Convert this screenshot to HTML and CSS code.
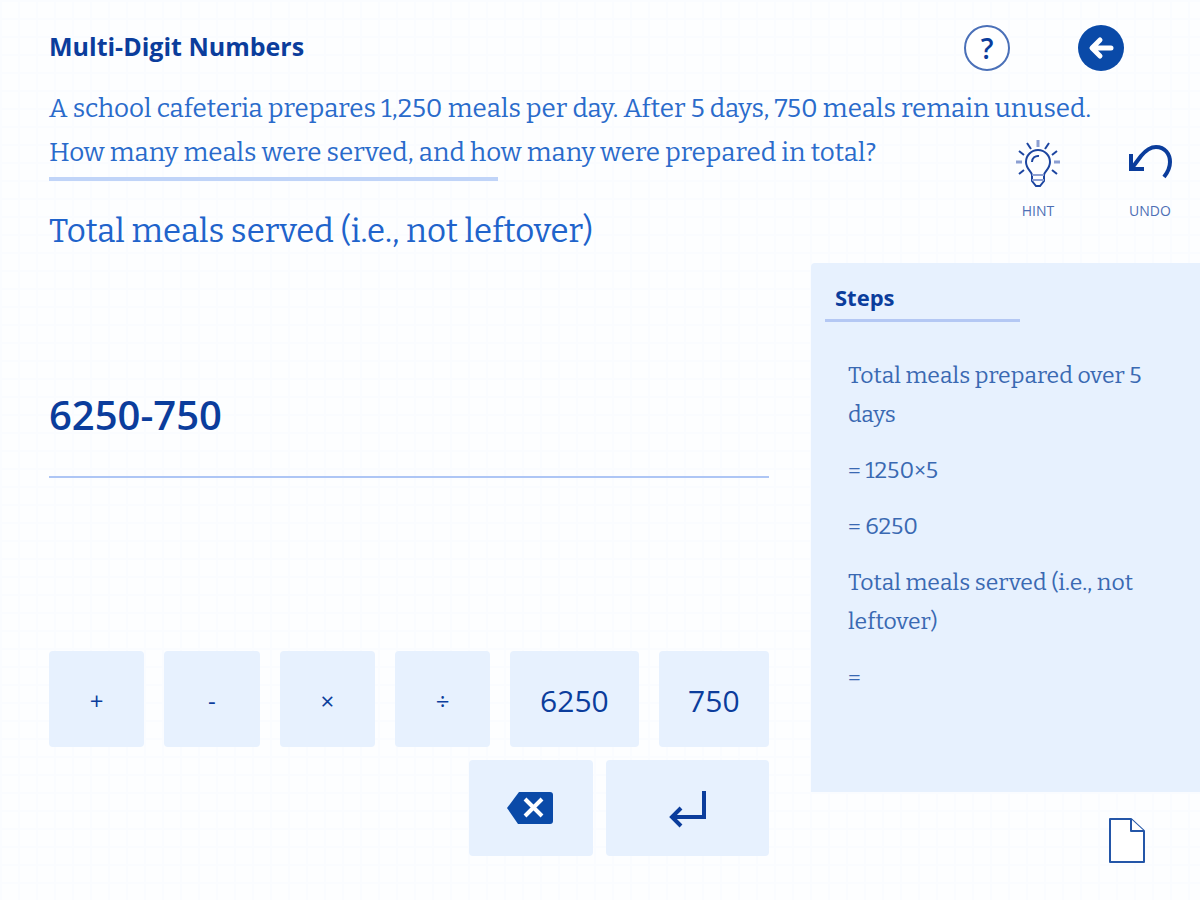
FILE: index.html
```html
<!DOCTYPE html>
<html lang="en">
<head>
<meta charset="utf-8">
<meta name="viewport" content="width=device-width, initial-scale=1">
<title>Multi-Digit Numbers</title>
<link rel="stylesheet" href="styles.css">
</head>
<body>
<div class="page">
  <header class="topbar">
    <h1 class="title">Multi-Digit Numbers</h1>
    <nav class="nav">
      <button class="round" type="button" aria-label="Help">?</button>
      <button class="round round-solid" type="button" aria-label="Back">
        <svg width="26" height="24" viewBox="0 0 26 24" fill="none" stroke="#fff" stroke-width="5" stroke-linecap="round" stroke-linejoin="round"><path d="M12 4 4 12l8 8M5 12h18"/></svg>
      </button>
    </nav>
  </header>

  <p class="problem">A school cafeteria prepares 1,250 meals per day. After 5 days, 750 meals remain unused.<br>How many meals were served, and how many were prepared in total?</p>

  <div class="tools">
    <button class="tool" type="button">
      <svg width="44" height="48" viewBox="0 0 44 48" fill="none" stroke="#1c45a0" stroke-width="2"><path d="M16 36c0-3-6-6-6-13a12 12 0 0 1 24 0c0 7-6 10-6 13v6l-4 5h-4l-4-5z"/><path d="M16 36h12M16 41h12" stroke="#8c9fd2"/><path d="M16 23a6 6 0 0 1 7-6"/><path d="M11 4l4 6M33 4l-4 6M3 12l5 4M41 12l-5 4M3 35l5-4M41 35l-5-4"/><path d="M22 1v7M0 23h6M44 23h-6" stroke="#8c9fd2" stroke-width="3"/></svg>
      <span>HINT</span>
    </button>
    <button class="tool" type="button">
      <svg width="44" height="48" viewBox="0 0 44 48" fill="none" stroke="#0b3d9c" stroke-width="4"><path d="M3 15v15h13"/><path d="M4 29 13 17C18 11 22 8 28 8c9 0 14 7 14 15 0 6-2 10-6 15"/></svg>
      <span>UNDO</span>
    </button>
  </div>

  <label class="prompt" for="answer">Total meals served (i.e., not leftover)</label>

  <main class="work">
    <input class="answer" id="answer" type="text" value="6250-750">
    <div class="keypad">
      <div class="keys">
        <button class="key" type="button">+</button>
        <button class="key" type="button">-</button>
        <button class="key" type="button">×</button>
        <button class="key" type="button">÷</button>
        <button class="key key-number" type="button">6250</button>
        <button class="key key-number" type="button">750</button>
      </div>
      <div class="actions">
        <button class="key" type="button" aria-label="Delete">
          <svg width="48" height="34" viewBox="0 0 48 34"><path d="M12 0h31q3 0 3 3v26q0 3-3 3H11L0 16z" fill="#0a4aa8"/><path d="m18 7 17 17M35 7 18 24" stroke="#fff" stroke-width="4"/></svg>
        </button>
        <button class="key" type="button" aria-label="Enter">
          <svg width="40" height="38" viewBox="0 0 40 38" fill="none" stroke="#0b3d9c" stroke-width="4"><path d="M36 1v26H3M13 18l-9 9 9 9"/></svg>
        </button>
      </div>
    </div>
  </main>

  <div class="side">
    <section class="steps">
      <h2 class="steps-title">Steps</h2>
      <div class="steps-list">
        <p>Total meals prepared over 5 days</p>
        <p>= 1250×5</p>
        <p>= 6250</p>
        <p>Total meals served (i.e., not leftover)</p>
        <p>=</p>
      </div>
    </section>
    <button class="sheet" type="button" aria-label="Scratch paper">
      <svg width="36" height="46" viewBox="0 0 36 46" fill="#fff" stroke="#2456a8" stroke-width="2" stroke-linejoin="round"><path d="M1 1h21l13 12v31H1z"/><path d="M22 1v12h13"/></svg>
    </button>
  </div>
</div>
</body>
</html>
```
FILE: styles.css
```css
* {
  box-sizing: border-box;
}

body {
  margin: 0;
  background-color: #fdfeff;
  background-image:
    linear-gradient(#fafcff 2px, transparent 2px),
    linear-gradient(90deg, #fafcff 2px, transparent 2px);
  background-size: 18px 18px;
  color: #0b3d9c;
  font-family: "Open Sans", "Noto Sans", sans-serif;
}

button {
  padding: 0;
  border: 0;
  background: none;
  color: inherit;
  font: inherit;
  cursor: pointer;
}

svg {
  display: block;
}

.page {
  display: grid;
  grid-template-columns: minmax(0, 1fr) 389px;
  grid-template-rows: auto auto 82px 1fr;
  min-height: 100vh;
}

.topbar {
  grid-column: 1 / -1;
  display: flex;
  align-items: center;
  justify-content: space-between;
  padding: 25px 76px 16px 49px;
}

.title {
  margin: 0;
  padding-bottom: 4px;
  font-size: 25px;
  line-height: 42px;
  font-weight: 700;
}

.nav {
  display: flex;
  gap: 68px;
}

.round {
  display: grid;
  place-items: center;
  width: 46px;
  height: 46px;
  border: 2px solid #4a70b8;
  border-radius: 50%;
  background: #fff;
  font-size: 28px;
  line-height: 28px;
  font-weight: 600;
}

.round-solid {
  border: 0;
  background: #0a4aa8;
}

.problem {
  grid-row: 2;
  grid-column: 1 / -1;
  margin: 0;
  padding: 0 49px;
  color: #2a6bcb;
  font-family: Bitter, "DejaVu Serif Condensed", "DejaVu Serif", serif;
  font-size: 26px;
  line-height: 44px;
}

.problem::after {
  content: "";
  display: block;
  width: 449px;
  max-width: 100%;
  height: 4px;
  margin-top: 2px;
  background: #c0d4f8;
}

.tools {
  grid-row: 2 / 4;
  grid-column: 2;
  align-self: end;
  justify-self: end;
  display: flex;
  gap: 62px;
  padding: 0 25px 44px 0;
}

.tool {
  display: flex;
  flex-direction: column;
  align-items: center;
  gap: 16px;
  width: 50px;
  color: #4e6fb5;
  font-size: 14px;
  line-height: 16px;
}

.prompt {
  grid-row: 3;
  grid-column: 1;
  align-self: start;
  padding: 28px 0 0 49px;
  color: #2063cb;
  font-family: Bitter, "DejaVu Serif Condensed", "DejaVu Serif", serif;
  font-size: 33px;
  line-height: 44px;
}

.work {
  display: flex;
  flex-direction: column;
  justify-content: space-between;
  padding: 103px 42px 44px 49px;
}

.answer {
  width: 100%;
  height: 112px;
  padding: 0 0 14px;
  border: 0;
  border-bottom: 2px solid #aec6f5;
  background: none;
  color: inherit;
  font-family: inherit;
  font-size: 40px;
  font-weight: 600;
  outline: none;
}

.keypad {
  display: grid;
  gap: 13px;
}

.keys {
  display: grid;
  grid-template-columns: repeat(4, 95fr) 128fr 110fr;
  gap: 20px;
}

.actions {
  display: grid;
  grid-template-columns: 124px 163px;
  justify-content: end;
  gap: 13px;
}

.key {
  display: grid;
  place-items: center;
  height: 96px;
  padding-top: 2px;
  border-radius: 4px;
  background: #e7f1fe;
  font-size: 24px;
}

.key-number {
  font-size: 30px;
}

.side {
  display: flex;
  flex-direction: column;
}

.steps {
  min-height: 529px;
  padding: 19px 0 24px 14px;
  border-top-left-radius: 4px;
  background: #e7f1fe;
}

.steps-title {
  width: 195px;
  margin: 0;
  padding: 0 10px 7px;
  border-bottom: 3px solid #b4c8f4;
  font-size: 22px;
  line-height: 30px;
}

.steps-list {
  display: grid;
  gap: 17px;
  padding: 34px 40px 0 23px;
  color: #3a69b2;
  font-family: Bitter, "DejaVu Serif Condensed", "DejaVu Serif", serif;
  font-size: 23px;
  line-height: 39px;
}

.steps-list p {
  margin: 0;
}

.sheet {
  align-self: flex-end;
  margin: 26px 55px 0 0;
}
```
